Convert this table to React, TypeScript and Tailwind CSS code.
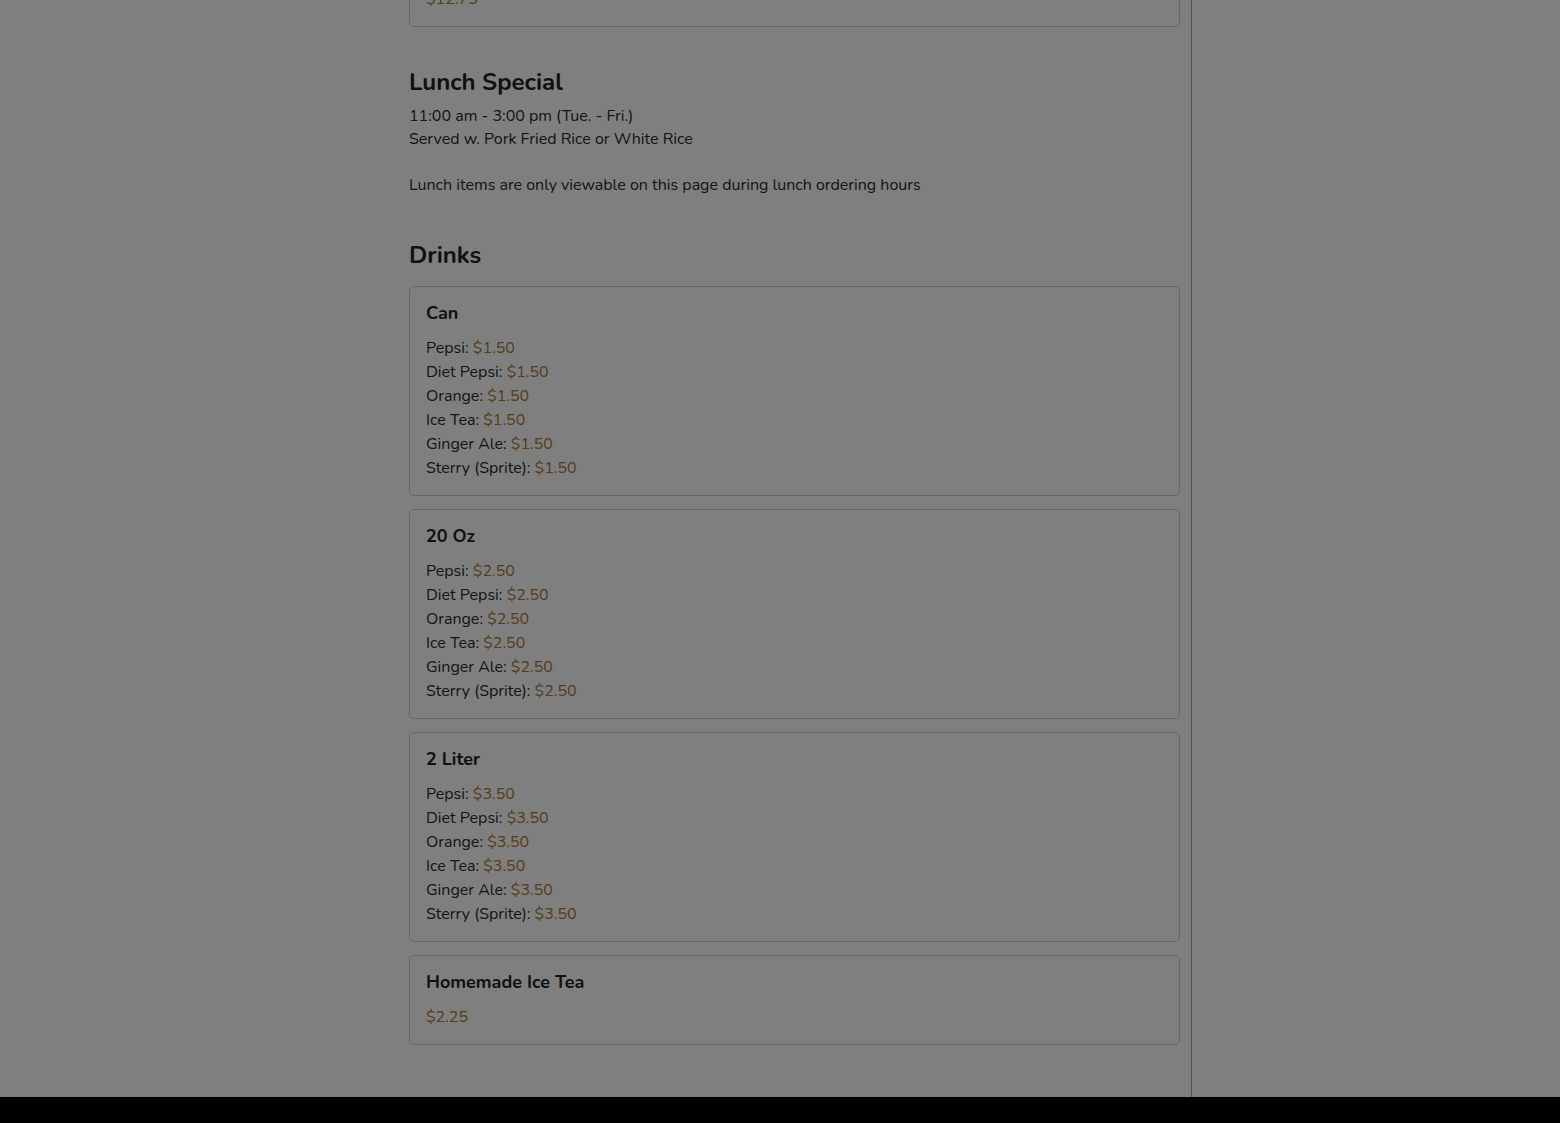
const font = { fontFamily: '"Nunito", Lato, "Noto Sans", sans-serif' };

type Item = { name: string; price: string };

const sizes: { title: string; price: string }[] = [
  { title: 'Can', price: '$1.50' },
  { title: '20 Oz', price: '$2.50' },
  { title: '2 Liter', price: '$3.50' },
];

const sodaNames = ['Pepsi', 'Diet Pepsi', 'Orange', 'Ice Tea', 'Ginger Ale', 'Sterry (Sprite)'];

const MenuCard = ({ title, items, price, className }: { title: string; items?: Item[]; price?: string; className?: string }) => (
  <div className={`rounded-[5px] border border-[#cfcfcf] bg-white px-4 pb-[15px] pt-4 ${className ?? ''}`}>
    <h3 className="text-[18px] font-bold leading-[21px] text-[#222]">{title}</h3>
    <div className="mt-3">
      {items?.map((it) => (
        <p key={it.name} className="text-[16px] leading-[24px] text-[#2a2a2a]">
          {it.name}: <span className="text-[#a87a34]">{it.price}</span>
        </p>
      ))}
      {price && <p className="text-[16px] leading-[24px] text-[#a87a34]">{price}</p>}
    </div>
  </div>
);

export default function App() {
  return (
    <div className="relative h-[1123px] w-full overflow-hidden bg-white" style={font}>
      <div className="h-[1097px] overflow-hidden pl-[409px]">
        <div className="flow-root h-full w-[783px] border-r border-[#a8a8a8] pr-[11px]">
          <MenuCard title="Combination Platter" price="$12.75" className="-mt-[63px]" />

          <section className="mt-[40px]">
            <h2 className="text-[24px] font-bold leading-[30px] text-[#222]">Lunch Special</h2>
            <div className="mt-[8px] text-[16px] leading-[23px] text-[#2a2a2a]">
              <p>11:00 am - 3:00 pm (Tue. - Fri.)</p>
              <p>Served w. Pork Fried Rice or White Rice</p>
              <p>&nbsp;</p>
              <p>Lunch items are only viewable on this page during lunch ordering hours</p>
            </div>
          </section>

          <section className="mt-[43px]">
            <h2 className="text-[24px] font-bold leading-[30px] text-[#222]">Drinks</h2>
            <div className="mt-[16px] flex flex-col gap-[13px]">
              {sizes.map((s) => (
                <MenuCard
                  key={s.title}
                  title={s.title}
                  items={sodaNames.map((n) => ({ name: n, price: s.price }))}
                />
              ))}
              <MenuCard title="Homemade Ice Tea" price="$2.25" />
            </div>
          </section>
        </div>
      </div>
      <div className="h-[26px] bg-black" />
      <div className="absolute inset-0 bg-black/50" />
    </div>
  );
}
